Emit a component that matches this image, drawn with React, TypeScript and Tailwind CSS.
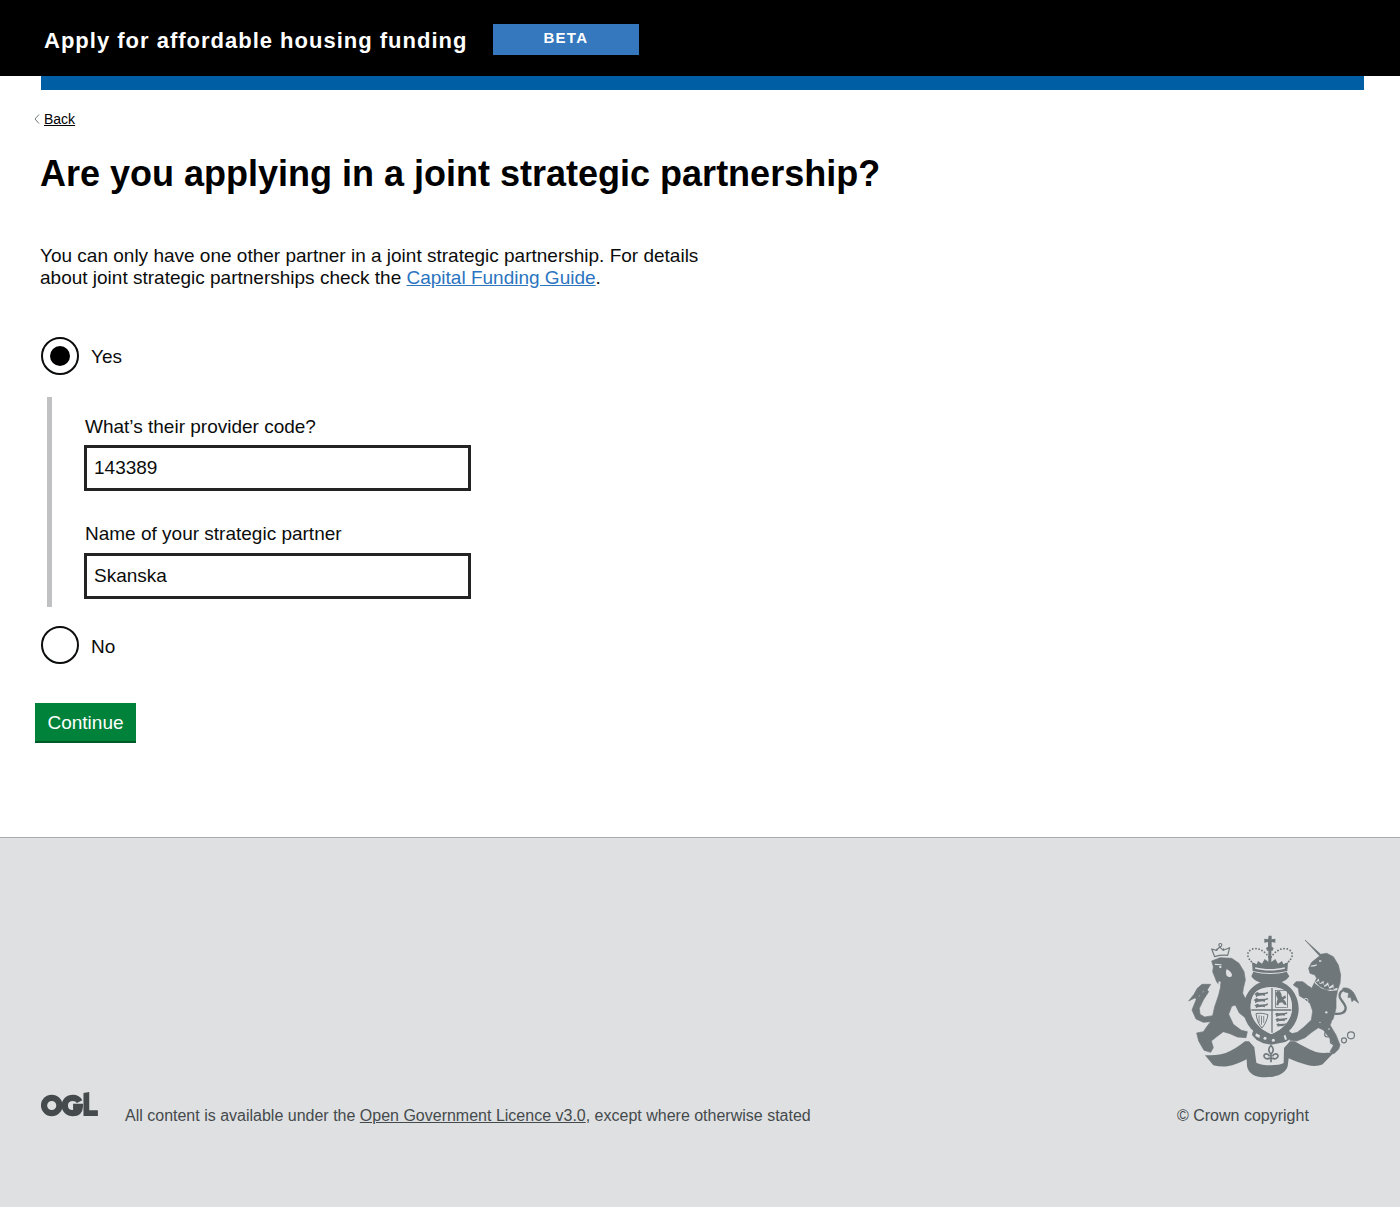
import React from "react";

function Crest() {
  const c = "#6f777b";
  const bg = "#dee0e2";
  return (
    <svg viewBox="0 0 600 480" className="w-[200px] h-[160px] block" aria-hidden="true">
      {/* Royal crown */}
      <g fill={c}>
        <path d="M296 32h9v11l11-2v12l-11-2v14l6 4-3 8h-4v38h-9V77h-4l-3-8 6-4V51l-11 2V41l11 2z" />
        <path d="M250 140c30 9 70 9 100 0l8 14c-4 8-14 14-22 17-22 5-48 5-70 0-8-3-18-9-22-17z" />
        <path d="M246 112l14 6 4-10 12 8 8-14 16 12 16-12 8 14 12-8 4 10 14-6-2 26c-32 8-72 8-104 0z" />
      </g>
      <g fill="none" stroke={c} strokeWidth="5.500" strokeLinecap="round" strokeDasharray="0.1 9.5">
        <path d="M252 116c-24-16-24-38-4-44 18-5 36 6 50 26" />
        <path d="M348 116c24-16 24-38 4-44-18-5-36 6-50 26" />
      </g>
      <path fill={bg} d="M256 127c28 7 60 7 88 0l1 4c-28 7-62 7-90 0z" />

      {/* Lion crown */}
      <g fill="none" stroke={c} strokeWidth="3.500" strokeLinejoin="round">
        <path d="M134 95 125 72l14 4 10-10 11 10 19-8-6 23c-13-1-27 0-39 4z" />
        <circle cx="151" cy="60" r="4.500" />
        <path d="M140 78l1-7M160 76l1-6" />
      </g>

      {/* Lion */}
      <g fill={c} stroke={c} strokeWidth="2" strokeLinejoin="round">
        <path d="M125 108 150 98 185 100 207 115 222 140 226 165 220 190 218 205 228 225 242 256 242 272 226 278 208 264 196 240 185 244 176 268 190 298 214 316 232 320 228 338 202 336 180 326 160 320 140 335 124 348 130 368 122 382 102 376 86 348 80 324 100 320 114 300 122 290 100 292 78 282 66 255 78 225 100 202 108 190 116 200 100 225 88 250 90 268 104 276 128 272 134 245 146 210 152 185 140 170 134 155 128 140 130 125Z" />
        <path d="M122 178 96 178 82 190 72 208 56 228 76 218 80 226 88 210 96 212 98 198 112 194Z" />
      </g>
      <g fill={bg}>
        <path d="M170 133c6 2 14 8 16 16 0 6-4 8-10 7-6-2-8-6-8-12 0-4 0-8 2-11z" />
        <circle cx="151" cy="126" r="3.500" />
        <path d="M134 116l20 2 1 3-20-1z" />
        <path d="M146 168l6 3-2 14-5-2z" />
      </g>

      {/* Unicorn */}
      <g fill={c} stroke={c} strokeWidth="2" strokeLinejoin="round">
        <path d="M405 45 452 88 470 85 490 95 505 120 512 150 510 175 503 195 498 220 498 250 490 280 480 300 498 330 510 360 506 372 492 386 480 380 490 362 478 338 460 315 445 308 425 322 405 338 380 348 360 346 358 328 382 322 402 306 424 285 428 258 420 235 404 222 388 212 385 190 370 180 378 170 398 170 415 182 425 190 440 160 435 150 420 145 416 130 425 112 440 100 449 93Z" />
        <path d="M518 190c12-4 24 2 32 12 6 8 8 18 16 32l-14-10-6 6-4-14-8 2 2-14-14-4z" />
      </g>
      <path fill="none" stroke={c} strokeWidth="7" d="M494 266c18 2 32-2 33-16 1-12-14-22-18-34-2-12 6-22 18-22" />
      {/* Unicorn details */}
      <path fill={bg} d="M428 158 437 172 446 160 449 176 460 167 463 182 474 172 478 186 490 178 492 192 502 188 502 196 480 198 454 190 436 176Z" />
      <path fill={c} d="M437 172 446 168 449 178 460 174 463 186 474 180 478 191 490 186 492 194 468 194 448 184Z" />
      <path fill={bg} d="M422 122c6-2 14-1 18-5l1 4c-6 4-13 4-19 4zM447 106h7v4h-7z" />
      <g fill="none" stroke={bg} strokeWidth="2.500">
        <circle cx="417" cy="175" r="6" />
        <circle cx="408" cy="226" r="6" />
      </g>
      <g fill={bg}>
        <circle cx="469" cy="262" r="3.500" />
        <circle cx="489" cy="290" r="4" />
        <circle cx="477" cy="312" r="2.500" />
        <circle cx="450" cy="292" r="2" />
      </g>
      {/* Chain */}
      <g fill="none" stroke={c} strokeWidth="3.500">
        <circle cx="472" cy="328" r="8" />
        <circle cx="489" cy="349" r="8" />
        <circle cx="522" cy="346" r="7.500" />
        <circle cx="543" cy="331" r="10.500" />
      </g>

      {/* Ribbon */}
      <path fill={c} d="M105 391c22 0 44 0 62-7 20-8 40-20 58-35l12 0 16 18 6 46c14 9 66 11 82 1l1-45 18-20h14c20 12 42 24 64 32 18 4 34 3 56 0l-16 16-20 21c-14 6-30 6-46 2-20-5-38-12-56-20l-3 24c-6 18-24 28-44 31-22 4-46 2-60-6-10-6-16-14-18-26l-1-20c-18 10-38 18-58 21-14 2-28 0-42-3z" />

      {/* Garter ring */}
      <path
        fill={c}
        fillRule="evenodd"
        d="M304 165c46 0 82 38 82 86 0 47-36 88-82 88-46 0-84-41-84-88 0-48 38-86 84-86zm0 22c-34 0-62 12-62 62 0 36 30 66 62 78 32-12 62-42 62-78 0-50-28-62-62-62z"
      />
      <path fill={bg} d="M304 187c-34 0-62 12-62 62 0 36 30 66 62 78 32-12 62-42 62-78 0-50-28-62-62-62z" />
      {/* Cross */}
      <path fill={c} d="M304 189h4v134h-4zM244 253h120v4h-120z" />
      <g fill={c}>
        {/* Three lions (England) */}
        <path d="M256 205l6-4 6 3 18-1 8-3-1 6-7 1-2 6-6-2-14 2-6 4-1-7-4-2zM254 223l6-4 6 3 20-1 8-3-1 6-7 1-2 6-6-2-16 2-6 4-1-7-4-2zM256 240l6-4 6 3 18-1 8-3-1 6-7 1-2 5-6-2-14 2-6 2-1-5-4-2z" />
        {/* Scotland */}
        <path d="M322 198l8 1 4 8 2 10 10-6 2 8-8 4 6 6 4 10-6 1-8-8-8 2-4 8-5-3 2-10 2-8-4-8-2-8z" />
        <path d="M316 195h36v2.500h-36zM318 246h32v2.500h-32zM315 195h2.500v53h-2.500zM351 195h2.500v53h-2.500z" />
        {/* Lions, fourth quarter */}
        <path d="M316 266l5-3 5 2 18-1 8-2-1 5-6 1-2 5-5-2-14 2-5 3-1-6-3-2zM318 282l5-3 5 2 17-1 7-2-1 5-6 1-2 5-5-2-13 2-5 3-1-6-3-2zM320 298l5-3 4 2 14-1 5-1-1 4-5 1-2 4-4-1-10 1-3 2-1-5-3-2z" />
      </g>
      {/* Ireland harp */}
      <path fill="none" stroke={c} strokeWidth="3" d="M258 266c12-3 26 0 36 3-2 14-8 28-18 40-10-10-16-26-18-43z" />
      <path fill={c} d="M266 271h2.500v22h-2.500zM273 272h2.500v27h-2.500zM280 273h2.500v20h-2.500z" />
      {/* Garter buckle band */}
      <path fill={c} d="M248 320l8-7c20 16 60 30 100 4l16 12-2 8-24 14-42 8-24-4-20-10-14-15z" />
      <g fill={bg}>
        <circle cx="285" cy="340" r="4.500" />
        <circle cx="310" cy="346" r="4.500" />
        <path d="M258 325l12 6-2 8-12-6z" />
        <path d="M346 329l5 14-6 2-4-13z" />
      </g>
      {/* Fleur-de-lis */}
      <path fill="none" stroke={c} strokeWidth="5" strokeLinejoin="round" d="M303 362c-9 7-9 17 0 26 9-9 9-19 0-26zM299 394c-4-9-16-10-17-2-1 8 10 12 17 8M307 394c4-9 16-10 17-2 1 8-10 12-17 8M303 390v22M293 400h20" />
    </svg>
  );
}

function OglLogo() {
  return (
    <svg viewBox="0 0 60 26" className="w-[58px] h-[25px] block" aria-hidden="true">
      <g fill="none" stroke="#454a4c" strokeWidth="6.500">
        <circle cx="11" cy="14" r="8" />
        <path d="M40 10c-1.600-3-4.400-4-7-4-5 0-8.400 3.400-8.400 8s3.400 8 8.400 8c4.200 0 7-2 7.200-6.500h-7" />
      </g>
      <path fill="#454a4c" d="M44 1l6-1v19h9v6H44z" />
    </svg>
  );
}

export default function App() {
  return (
    <div className="min-h-[1207px] flex flex-col bg-white text-[#0b0c0c] font-['Liberation_Sans',Arial,sans-serif]">
      <header className="h-[76px] bg-black flex items-center pl-[44px]">
        <span className="text-white font-bold text-[22px] tracking-[1px] leading-none mt-[5px]">
          Apply for affordable housing funding
        </span>
        <span className="ml-[26px] w-[146px] h-[31px] mt-[3px] pb-[2px] pr-[1px] bg-[#3578bd] text-white text-[15px] font-bold tracking-[1.3px] flex items-center justify-center">
          BETA
        </span>
      </header>
      <div className="ml-[41px] mr-[36px] h-[14px] bg-[#005ea5]" />

      <main className="flex-1 h-[747px] shrink-0 grow-0 basis-[747px]">
        <a href="#" className="mt-[21px] ml-[34px] flex items-center text-[14px] leading-[16px] text-black">
          <svg viewBox="0 0 6 10" className="w-[6px] h-[10px] mr-[4px]" aria-hidden="true">
            <path d="M5 .5 1 5l4 4.500" fill="none" stroke="#6f777b" strokeWidth="1" />
          </svg>
          <span className="underline">Back</span>
        </a>

        <h1 className="mt-[25px] ml-[40px] text-[36px] leading-[44px] font-bold text-black">
          Are you applying in a joint strategic partnership?
        </h1>

        <p className="mt-[49px] ml-[40px] w-[680px] text-[19px] leading-[22px]">
          You can only have one other partner in a joint strategic partnership. For details about joint strategic partnerships check the{" "}
          <a href="#" className="text-[#2b74c0] underline">Capital Funding Guide</a>.
        </p>

        <div className="mt-[47px] ml-[41px] flex items-center h-[40px]">
          <span className="w-[38px] h-[38px] rounded-full border-2 border-[#0b0c0c] flex items-center justify-center">
            <span className="w-[20px] h-[20px] rounded-full bg-black" />
          </span>
          <span className="ml-[12px] mt-[1px] text-[19px] leading-[24px]">Yes</span>
        </div>

        <div className="mt-[21px] ml-[47px] w-[430px] h-[210px] border-l-[5px] border-[#bfc1c3] pl-[32px] pt-[19px]">
          <label className="block pl-[1px] text-[19px] leading-[22px]">What’s their provider code?</label>
          <div className="mt-[7px] w-[387px] h-[46px] border-[3px] border-[#232323] pl-[7px] flex items-center text-[19px]">143389</div>
          <label className="block pl-[1px] mt-[32px] text-[19px] leading-[22px]">Name of your strategic partner</label>
          <div className="mt-[8px] w-[387px] h-[46px] border-[3px] border-[#232323] pl-[7px] flex items-center text-[19px]">Skanska</div>
        </div>

        <div className="mt-[18px] ml-[41px] flex items-center h-[40px]">
          <span className="w-[38px] h-[38px] rounded-full border-2 border-[#0b0c0c]" />
          <span className="ml-[12px] mt-[3px] text-[19px] leading-[24px]">No</span>
        </div>

        <button className="mt-[38px] ml-[35px] w-[101px] h-[40px] bg-[#00823b] border-b-2 border-[#005a28] text-white text-[19px] leading-none flex items-center justify-center">
          Continue
        </button>
      </main>

      <footer className="h-[370px] bg-[#dee0e2] border-t border-[#a8acae] pl-[41px] pr-[30px] flex items-start justify-between text-[#454a4c] text-[16px]">
        <div className="mt-[254px] flex items-start">
          <OglLogo />
          <p className="ml-[26px] mt-[14px] leading-[20px]">
            All content is available under the <a href="#" className="underline">Open Government Licence v3.0</a>, except where otherwise stated
          </p>
        </div>
        <div className="mt-[87px] w-[200px] flex flex-col items-start">
          <Crest />
          <p className="mt-[21px] ml-[7px] leading-[20px] whitespace-nowrap">© Crown copyright</p>
        </div>
      </footer>
    </div>
  );
}
